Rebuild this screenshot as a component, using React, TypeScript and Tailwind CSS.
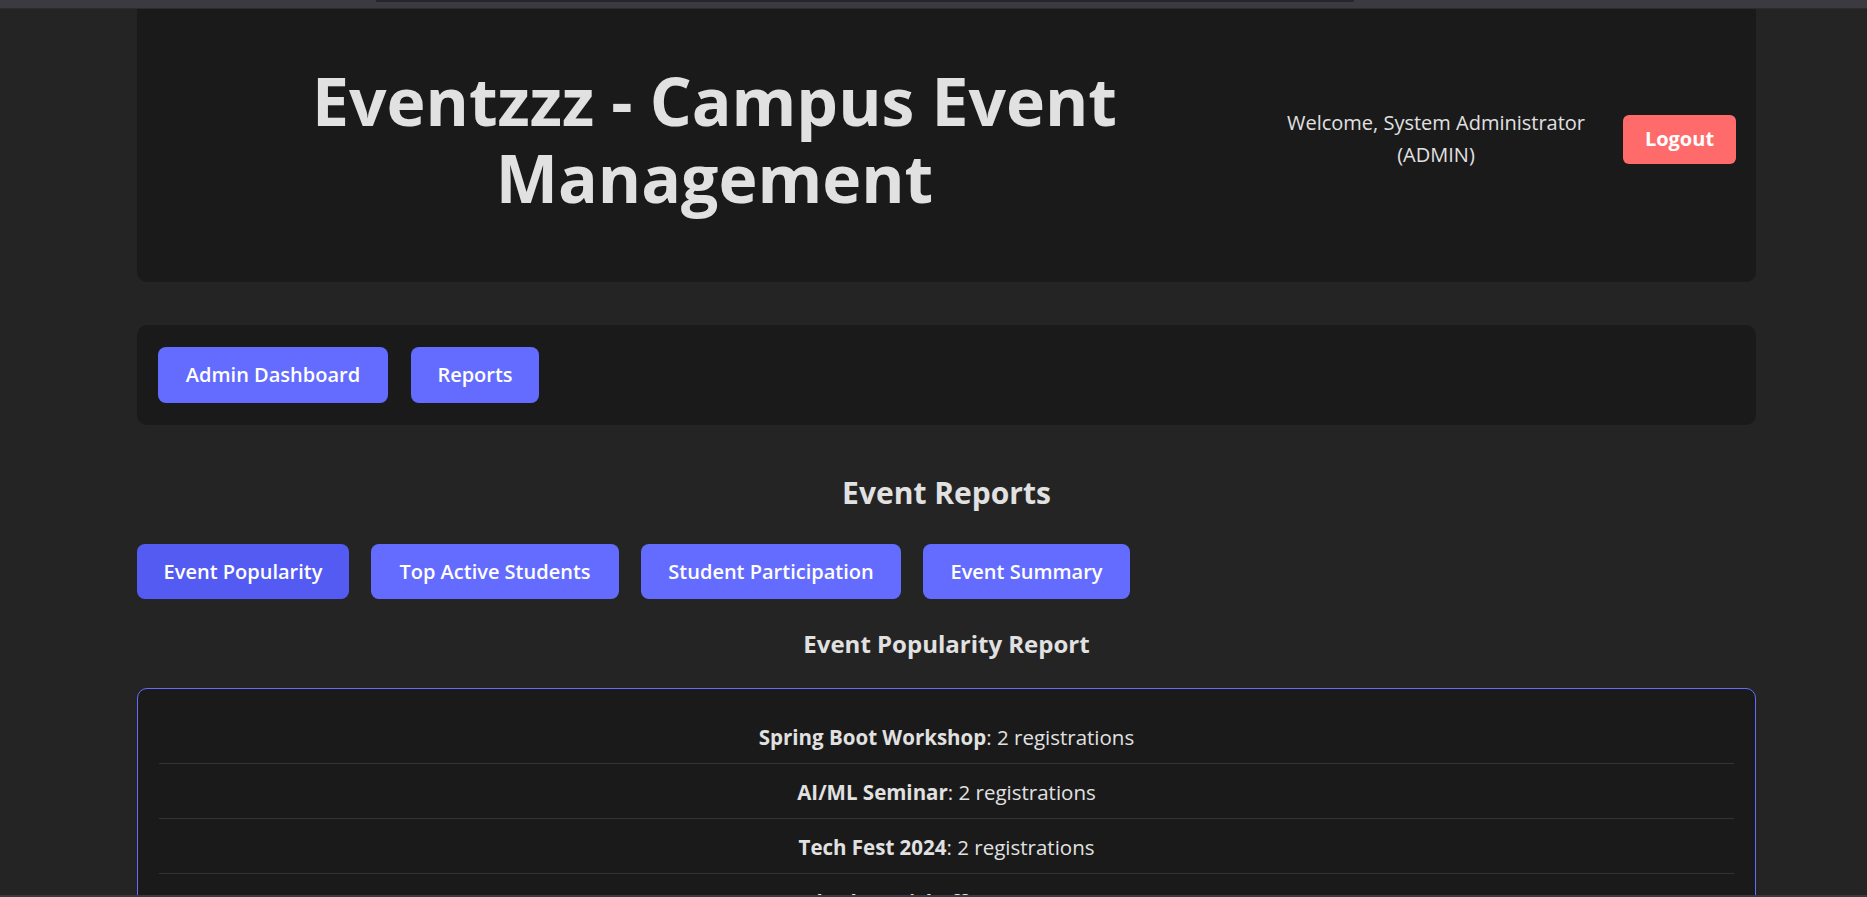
import React, { useState } from "react";

const navLinks = ["Admin Dashboard", "Reports"];

const reportTabs = [
  { id: "popularity", label: "Event Popularity", width: "w-[212px]" },
  { id: "active", label: "Top Active Students", width: "w-[248px]" },
  { id: "participation", label: "Student Participation", width: "w-[260px]" },
  { id: "summary", label: "Event Summary", width: "w-[207px]" },
];

const popularity = [
  { name: "Spring Boot Workshop", count: 2 },
  { name: "AI/ML Seminar", count: 2 },
  { name: "Tech Fest 2024", count: 2 },
  { name: "Hackathon Kickoff", count: 1 },
];

const App = () => {
  const [activeTab, setActiveTab] = useState("popularity");

  return (
    <div className="min-h-screen bg-[#242424] text-[#e1e1e1] font-['Open_Sans',sans-serif]">
      {/* browser strip */}
      <div className="h-[9px] bg-[#3a3a40] border-b border-[#2b2b30]">
        <div className="ml-[376px] w-[978px] h-[2px] bg-[#26262a]" />
      </div>

      <div className="ml-[137px] w-[1619px] pb-10">
        {/* header */}
        <header className="h-[273px] bg-[#1a1a1a] rounded-b-[10px] flex items-center gap-[4px] px-[20px] pb-[13px]">
          <h1 className="flex-1 text-center text-[66px] leading-[77px] font-bold">
            Eventzzz - Campus Event Management
          </h1>
          <div className="flex items-center gap-[27px]">
            <span className="w-[320px] text-center text-[20px] leading-[32px]">
              Welcome, System Administrator (ADMIN)
            </span>
            <button className="w-[113px] h-[49px] rounded-[6px] bg-[#ff6b6b] text-white text-[20px] font-bold">
              Logout
            </button>
          </div>
        </header>

        {/* nav */}
        <nav className="mt-[43px] bg-[#1a1a1a] rounded-[10px] px-[21px] py-[22px] flex gap-[23px]">
          {navLinks.map((link) => (
            <button
              key={link}
              className={`${link === "Reports" ? "w-[128px]" : "w-[230px]"} h-[56px] rounded-[8px] bg-[#646cff] text-white text-[20px] font-semibold`}
            >
              {link}
            </button>
          ))}
        </nav>

        {/* reports */}
        <section className="mt-[50px]">
          <h2 className="text-center text-[30px] leading-[36px] font-bold">Event Reports</h2>

          <div className="mt-[33px] flex gap-[22px]">
            {reportTabs.map((tab) => (
              <button
                key={tab.id}
                onClick={() => setActiveTab(tab.id)}
                className={`${tab.width} h-[55px] rounded-[8px] text-white text-[20px] font-semibold ${
                  activeTab === tab.id ? "bg-[#535bf2]" : "bg-[#646cff]"
                }`}
              >
                {tab.label}
              </button>
            ))}
          </div>

          <h3 className="mt-[30px] text-center text-[24px] leading-[30px] font-bold">
            Event Popularity Report
          </h3>

          <div className="mt-[29px] bg-[#1a1a1a] border border-[#646cff] rounded-[10px] px-[21px] pt-[20px] pb-[20px]">
            <ul>
              {popularity.map((ev) => (
                <li
                  key={ev.name}
                  className="h-[55px] pt-[3px] flex items-center justify-center border-b border-[#333] text-[20.5px]"
                >
                  <span>
                    <strong className="font-bold">{ev.name}</strong>: {ev.count} registrations
                  </span>
                </li>
              ))}
            </ul>
          </div>
        </section>
      </div>

      {/* bottom window edge */}
      <div className="fixed bottom-0 left-0 right-0 h-[2px] bg-[#3a3a40]" />
    </div>
  );
};

export default App;
